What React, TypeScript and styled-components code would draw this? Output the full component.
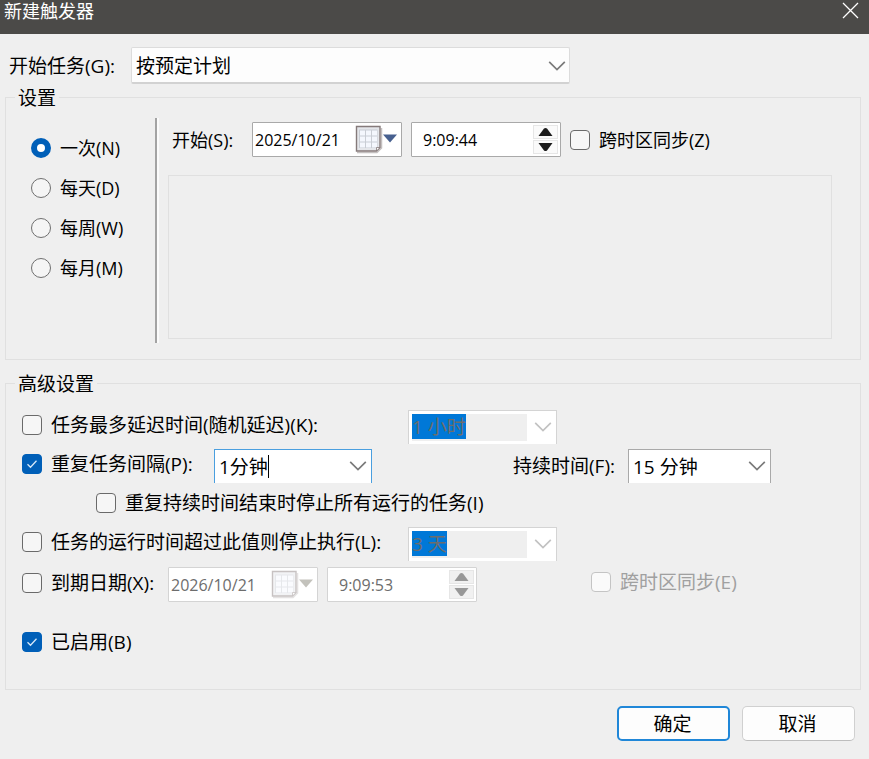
import React, { useId, useState } from 'react';
import styled, { createGlobalStyle, css } from 'styled-components';

const GlobalStyle = createGlobalStyle`
  *, *::before, *::after { box-sizing: border-box; }
  body {
    margin: 0;
    background: #efefef;
    color: #000;
    font-family: 'Open Sans', 'Noto Sans CJK SC', sans-serif;
    font-size: 19px;
    line-height: 24px;
  }
  input, select, button { font: inherit; color: inherit; margin: 0; }
`;

const Dialog = styled.div`
  min-height: 100vh;
  display: flex;
  flex-direction: column;
  background: #efefef;
`;

const TitleBar = styled.header`
  display: flex;
  justify-content: space-between;
  align-items: flex-start;
  height: 34px;
  padding: 0 10px 0 4px;
  background: #4b4a48;
  color: #fff;
`;

const Title = styled.h1`
  margin: 0;
  font-size: 18px;
  line-height: 22px;
  font-weight: 400;
`;

const IconButton = styled.button`
  display: flex;
  align-items: center;
  justify-content: center;
  padding: 0;
  border: 0;
  background: none;
`;

const CloseButton = styled(IconButton)`
  width: 17px;
  height: 21px;
`;

const Form = styled.form`
  padding: 13px 8px 18px 5px;
`;

const TopRow = styled.div`
  display: flex;
  align-items: center;
  padding-left: 4px;
`;

const TopLabel = styled.label`
  flex: none;
  width: 122px;
`;

const SelectBox = styled.div`
  display: grid;
  align-items: center;
  flex: 0 1 439px;
  height: 37px;

  & > * { grid-area: 1 / 1; }
  & > svg { justify-self: end; margin-right: 4px; pointer-events: none; }
`;

const Select = styled.select`
  appearance: none;
  width: 100%;
  height: 100%;
  padding: 2px 30px 0 4px;
  border: 1px solid #dcdcdc;
  border-bottom: 2px solid #d2d2d2;
  border-radius: 2px;
  background: #fdfdfd;
  outline: none;
`;

const Group = styled.fieldset<{ $advanced?: boolean }>`
  min-width: 0;
  margin: ${p => (p.$advanced ? '11px' : '1px')} 0 0;
  padding: ${p => (p.$advanced ? '12px 16px 28px' : '9px 28px 16px 25px')};
  border: 1px solid #e0e0e0;
`;

const GroupLegend = styled.legend<{ $advanced?: boolean }>`
  height: 24px;
  margin-left: ${p => (p.$advanced ? '-7px' : '-16px')};
  padding: 1px 3px 0;
`;

const ScheduleLayout = styled.div`
  display: flex;
  min-height: 225px;
`;

const RadioColumn = styled.div`
  display: flex;
  flex-direction: column;
  width: 124px;
  padding-top: 10px;
  font-size: 18px;
`;

const OptionLabel = styled.label<{ $disabled?: boolean; $small?: boolean; $width?: number }>`
  display: flex;
  align-items: center;
  gap: 9px;
  flex: none;
  white-space: nowrap;
  color: ${p => (p.$disabled ? '#a0a0a0' : 'inherit')};
  ${p => p.$small && css`font-size: 18px;`}
  ${p => p.$width && css`width: ${p.$width}px;`}
`;

const RadioLabel = styled(OptionLabel)`
  height: 40px;
`;

const Radio = styled.input`
  appearance: none;
  flex: none;
  width: 20px;
  height: 20px;
  border: 1px solid #6f6f6f;
  border-radius: 50%;
  background: #f5f5f5;

  &:checked {
    border: 6px solid #005fb8;
    background: #fff;
  }
`;

const Separator = styled.div`
  flex: none;
  width: 4px;
  margin-right: 9px;
  border-left: 2px solid #a3a3a3;
  border-right: 2px solid #fbfbfb;
`;

const ScheduleDetail = styled.div`
  display: flex;
  flex-direction: column;
  gap: 18px;
  flex: 1;
  min-width: 0;
  padding: 4px 0;
`;

const StartRow = styled.div`
  display: flex;
  align-items: center;
  padding-left: 4px;
`;

const StartLabel = styled.label`
  width: 80px;
  font-size: 18px;
`;

const EmptyPanel = styled.div`
  flex: 1;
  border: 1px solid #e0e0e0;
`;

const CheckMark = styled.span`
  display: grid;
  flex: none;
  width: 20px;
  height: 20px;
  place-items: center;

  & > * { grid-area: 1 / 1; }
  & > svg { pointer-events: none; }
`;

const CheckInput = styled.input`
  appearance: none;
  width: 20px;
  height: 20px;
  border: 1px solid #6a6a6a;
  border-radius: 4px;
  background: #f6f6f6;

  &:checked { border-color: #005fb8; background: #005fb8; }
  &:disabled { border-color: #c4c4c4; background: #fafafa; }
`;

const FieldBox = styled.div<{ $disabled?: boolean }>`
  display: flex;
  align-items: center;
  flex: none;
  width: 150px;
  height: 35px;
  margin-right: 9px;
  border: 1px solid ${p => (p.$disabled ? '#d4d4d4' : '#a9a9a9')};
  border-radius: 1px;
  background: #fff;
  color: ${p => (p.$disabled ? '#6d6d6d' : '#000')};
  font-size: 16px;
`;

const FieldInput = styled.input<{ $indent: number }>`
  flex: 1;
  min-width: 0;
  height: 100%;
  padding: 0 0 0 ${p => p.$indent}px;
  border: 0;
  background: none;
  outline: none;
`;

const CalendarButton = styled(IconButton)`
  margin-right: 3px;
`;

const Spinner = styled.div`
  display: flex;
  flex-direction: column;
  gap: 1px;
  margin-right: 2px;
`;

const SpinButton = styled(IconButton)`
  width: 25px;
  height: 14px;
  border: 1px solid #e6e6e6;
  background: #fafafa;

  &:disabled { background: #f1f1f1; }
`;

const AdvancedRow = styled.div<{ $indent?: boolean; $kind?: 'date' | 'last' }>`
  display: flex;
  align-items: center;
  height: ${p => (p.$kind === 'date' ? 43 : 39)}px;
  ${p => p.$indent && css`padding-left: 74px;`}
  ${p => p.$kind === 'last' && css`margin-top: 16px;`}

  & > ${OptionLabel} {
    padding-bottom: ${p => (p.$kind === 'last' ? 0 : 4)}px;
  }
`;

const comboBorders = { normal: '#a9a9a9', focused: '#4a9fdf', disabled: '#d4d4d4' };

const ComboBox = styled.div<{ $state: keyof typeof comboBorders; $width: number }>`
  display: flex;
  align-items: center;
  justify-content: space-between;
  flex: none;
  width: ${p => p.$width}px;
  height: 34px;
  padding: 0 4px 0 ${p => (p.$state === 'disabled' ? '3px' : '4px')};
  border: 1px solid ${p => comboBorders[p.$state]};
  border-bottom: 0;
  background: #fff;
`;

const ComboText = styled.div<{ $disabled?: boolean }>`
  display: flex;
  align-items: ${p => (p.$disabled ? 'flex-start' : 'center')};
  flex: 1;
  min-width: 0;
  height: 27px;
  margin-right: 7px;
  background: ${p => (p.$disabled ? '#efefef' : 'transparent')};
`;

const ComboInput = styled.input<{ $selected?: boolean }>`
  field-sizing: content;
  height: 25px;
  padding: 0;
  border: 0;
  background: ${p => (p.$selected ? '#0078d7' : 'transparent')};
  color: ${p => (p.$selected ? '#6d6d6d' : '#000')};
  outline: none;
  caret-color: transparent;
`;

const Caret = styled.span`
  width: 1px;
  height: 23px;
  background: #000;
`;

const DurationLabel = styled.label`
  flex: none;
  width: 115px;
  margin-left: 141px;
`;

const ZoneSlot = styled.div`
  margin-left: 105px;
  padding-bottom: 6px;
`;

const Actions = styled.footer`
  display: flex;
  justify-content: flex-end;
  gap: 12px;
  padding: 16px 6px 0 0;
`;

const ActionButton = styled.button<{ $primary?: boolean }>`
  width: 113px;
  height: 35px;
  padding: 0 2px 0 0;
  border: ${p => (p.$primary ? '2px solid #2087d8' : '1px solid #d0d0d0')};
  border-bottom-color: ${p => (p.$primary ? '#2087d8' : '#bdbdbd')};
  border-radius: 5px;
  background: #fdfdfd;
`;

const Chevron = ({ color = '#7a7a7a' }: { color?: string }) => (
  <svg width="18" height="12" viewBox="0 0 18 12" fill="none" aria-hidden="true">
    <path d="M1.2 1.8 9 9.6 16.8 1.8" stroke={color} strokeWidth="1.7" />
  </svg>
);

const CalendarIcon = ({ disabled }: { disabled?: boolean }) => (
  <svg width="43" height="29" viewBox="0 0 43 29" aria-hidden="true">
    <g opacity={disabled ? 0.45 : 1}>
      <path d="M2 27.500h20l4.500-4.500V3" fill="none" stroke="#c4c0c0" strokeWidth="1.5" />
      <path d="M1.500 1.500h23.500v21l-3.500 3.500h-20z" fill="#e4e6ea" stroke="#857a7a" strokeWidth="1.4" />
      <path d="M4 4.500h18.500v18.500h-18.500z" fill="#c9cdd4" />
      <path
        d="M5 5.500h5v5H5zM11 5.500h5v5h-5zM17 5.500h5v5h-5zM5 11.500h5v5H5zM11 11.500h5v5h-5zM17 11.500h5v5h-5zM5 17.500h5v5H5zM11 17.500h5v5h-5zM17 17.500h5v5h-5z"
        fill="#f4f7fd"
      />
      <path d="M21.500 26v-3.500h3.500z" fill="#fff" stroke="#857a7a" strokeWidth="0.8" />
    </g>
    <path d="M28 9.500h14l-7 8z" fill={disabled ? '#c3c2bc' : '#47608f'} />
  </svg>
);

const Arrow = ({ down, disabled }: { down?: boolean; disabled?: boolean }) => (
  <svg width="15" height="10" viewBox="0 0 15 10" aria-hidden="true">
    <path d={down ? 'M0.500 1h14L9 8.500q-1.500 1-3 0z' : 'M0.500 9h14L9 1.500q-1.500-1-3 0z'} fill={disabled ? '#989898' : '#1b1b1b'} />
  </svg>
);

interface CheckProps {
  label: string;
  defaultChecked?: boolean;
  disabled?: boolean;
  small?: boolean;
  width?: number;
}

function CheckOption({ label, defaultChecked = false, disabled, small, width }: CheckProps) {
  const [checked, setChecked] = useState(defaultChecked);
  return (
    <OptionLabel $disabled={disabled} $small={small} $width={width}>
      <CheckMark>
        <CheckInput type="checkbox" checked={checked} disabled={disabled} onChange={e => setChecked(e.target.checked)} />
        {checked && (
          <svg width="12" height="10" viewBox="0 0 12 10" fill="none" aria-hidden="true">
            <path d="M1.500 5.200 4.500 8.200 10.500 1.800" stroke="#d6e8f8" strokeWidth="1.3" />
          </svg>
        )}
      </CheckMark>
      {label}
    </OptionLabel>
  );
}

function DateField({ id, value, disabled, label }: { id?: string; value: string; disabled?: boolean; label: string }) {
  return (
    <FieldBox $disabled={disabled}>
      <FieldInput id={id} aria-label={label} $indent={2} defaultValue={value} disabled={disabled} />
      <CalendarButton type="button" aria-label="选择日期" disabled={disabled}>
        <CalendarIcon disabled={disabled} />
      </CalendarButton>
    </FieldBox>
  );
}

function TimeField({ value, disabled, label }: { value: string; disabled?: boolean; label: string }) {
  return (
    <FieldBox $disabled={disabled}>
      <FieldInput aria-label={label} $indent={11} defaultValue={value} disabled={disabled} />
      <Spinner>
        <SpinButton type="button" aria-label="增加" disabled={disabled}><Arrow disabled={disabled} /></SpinButton>
        <SpinButton type="button" aria-label="减少" disabled={disabled}><Arrow down disabled={disabled} /></SpinButton>
      </Spinner>
    </FieldBox>
  );
}

interface ComboProps {
  id?: string;
  label: string;
  value: string;
  width: number;
  state?: keyof typeof comboBorders;
}

function Combo({ id, label, value, width, state = 'normal' }: ComboProps) {
  const disabled = state === 'disabled';
  return (
    <ComboBox $state={state} $width={width}>
      <ComboText $disabled={disabled}>
        <ComboInput id={id} aria-label={label} defaultValue={value} disabled={disabled} $selected={disabled} />
        {state === 'focused' && <Caret />}
      </ComboText>
      <IconButton type="button" aria-label="展开列表" disabled={disabled}>
        <Chevron color={disabled ? '#c2c2c2' : undefined} />
      </IconButton>
    </ComboBox>
  );
}

const frequencies = ['一次(N)', '每天(D)', '每周(W)', '每月(M)'];

export default function App() {
  const [frequency, setFrequency] = useState(frequencies[0]);
  const taskId = useId();
  const startId = useId();
  const durationId = useId();

  return (
    <>
      <GlobalStyle />
      <Dialog role="dialog" aria-label="新建触发器">
        <TitleBar>
          <Title>新建触发器</Title>
          <CloseButton type="button" aria-label="关闭">
            <svg width="17" height="17" viewBox="0 0 17 17" fill="none" aria-hidden="true">
              <path d="M1 1 16 16M16 1 1 16" stroke="#fff" strokeWidth="1.3" />
            </svg>
          </CloseButton>
        </TitleBar>
        <Form onSubmit={e => e.preventDefault()}>
          <TopRow>
            <TopLabel htmlFor={taskId}>开始任务(G):</TopLabel>
            <SelectBox>
              <Select id={taskId} defaultValue="schedule">
                <option value="schedule">按预定计划</option>
              </Select>
              <Chevron />
            </SelectBox>
          </TopRow>

          <Group>
            <GroupLegend>设置</GroupLegend>
            <ScheduleLayout>
              <RadioColumn>
                {frequencies.map(name => (
                  <RadioLabel key={name}>
                    <Radio type="radio" name="frequency" checked={frequency === name} onChange={() => setFrequency(name)} />
                    {name}
                  </RadioLabel>
                ))}
              </RadioColumn>
              <Separator />
              <ScheduleDetail>
                <StartRow>
                  <StartLabel htmlFor={startId}>开始(S):</StartLabel>
                  <DateField id={startId} label="开始日期" value="2025/10/21" />
                  <TimeField label="开始时间" value="9:09:44" />
                  <CheckOption label="跨时区同步(Z)" small />
                </StartRow>
                <EmptyPanel />
              </ScheduleDetail>
            </ScheduleLayout>
          </Group>

          <Group $advanced>
            <GroupLegend $advanced>高级设置</GroupLegend>
            <AdvancedRow>
              <CheckOption label="任务最多延迟时间(随机延迟)(K):" width={386} />
              <Combo label="延迟时间" value="1 小时" width={149} state="disabled" />
            </AdvancedRow>
            <AdvancedRow>
              <CheckOption label="重复任务间隔(P):" width={192} defaultChecked />
              <Combo label="重复间隔" value="1分钟" width={158} state="focused" />
              <DurationLabel htmlFor={durationId}>持续时间(F):</DurationLabel>
              <Combo id={durationId} label="持续时间" value="15 分钟" width={143} />
            </AdvancedRow>
            <AdvancedRow $indent>
              <CheckOption label="重复持续时间结束时停止所有运行的任务(I)" />
            </AdvancedRow>
            <AdvancedRow>
              <CheckOption label="任务的运行时间超过此值则停止执行(L):" width={386} />
              <Combo label="停止时间" value="3 天" width={149} state="disabled" />
            </AdvancedRow>
            <AdvancedRow $kind="date">
              <CheckOption label="到期日期(X):" width={146} />
              <DateField label="到期日期" value="2026/10/21" disabled />
              <TimeField label="到期时间" value="9:09:53" disabled />
              <ZoneSlot>
                <CheckOption label="跨时区同步(E)" disabled />
              </ZoneSlot>
            </AdvancedRow>
            <AdvancedRow $kind="last">
              <CheckOption label="已启用(B)" defaultChecked />
            </AdvancedRow>
          </Group>

          <Actions>
            <ActionButton type="submit" $primary>确定</ActionButton>
            <ActionButton type="button">取消</ActionButton>
          </Actions>
        </Form>
      </Dialog>
    </>
  );
}
